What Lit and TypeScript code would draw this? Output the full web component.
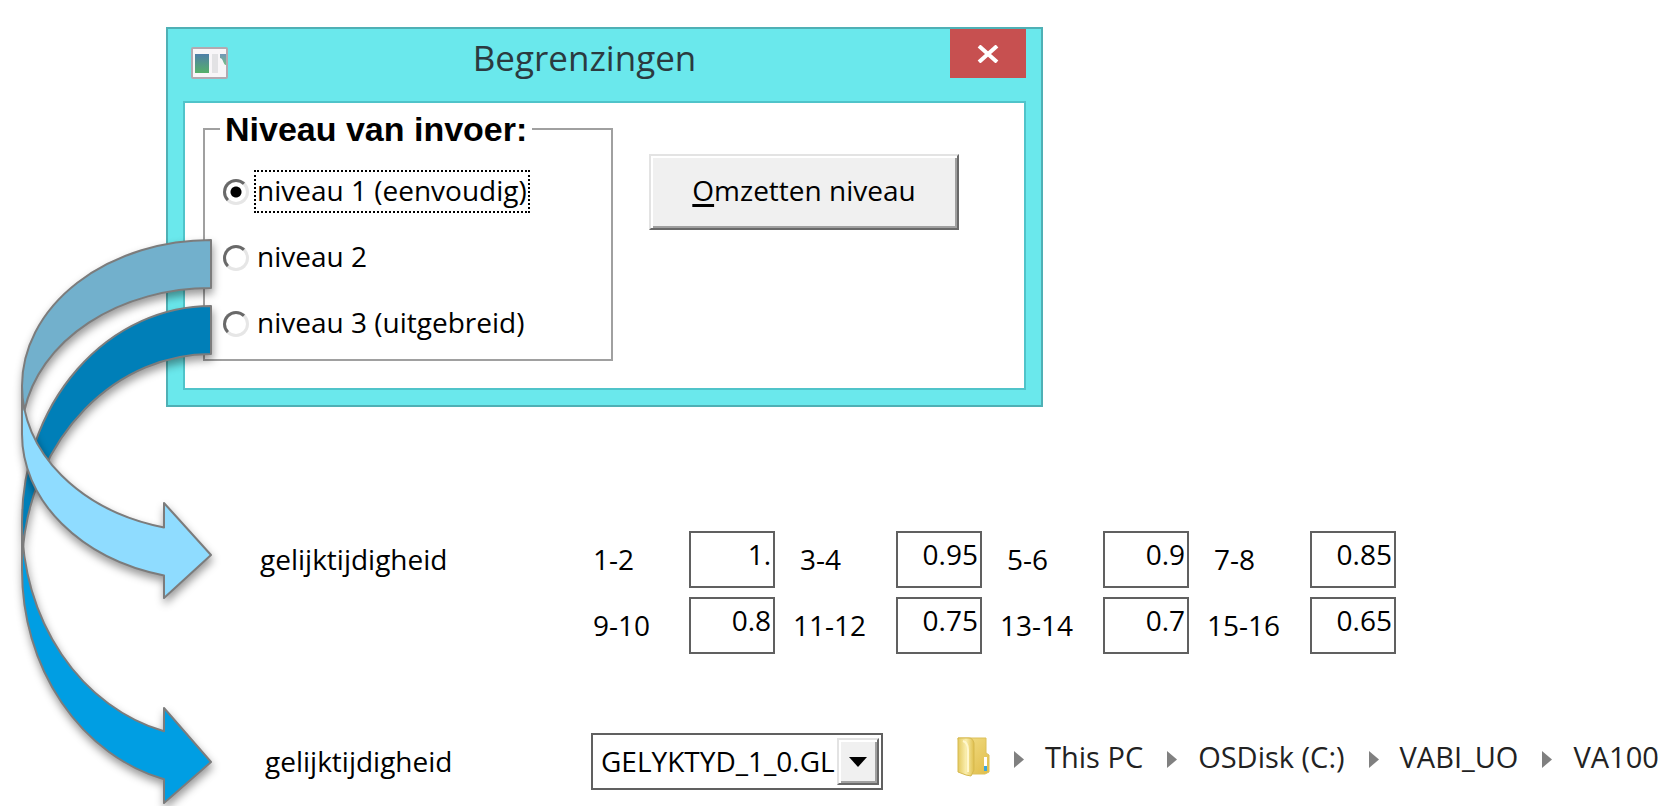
import { LitElement, html, css, svg } from "lit";
import { customElement, state } from "lit/decorators.js";

interface Factor { range: string; value: string; wide?: boolean }

const FACTORS: Factor[] = [
  { range: "1-2", value: "1." },
  { range: "3-4", value: "0.95" },
  { range: "5-6", value: "0.9" },
  { range: "7-8", value: "0.85" },
  { range: "9-10", value: "0.8" },
  { range: "11-12", value: "0.75", wide: true },
  { range: "13-14", value: "0.7", wide: true },
  { range: "15-16", value: "0.65", wide: true },
];

const LEVELS = ["niveau 1 (eenvoudig)", "niveau 2", "niveau 3 (uitgebreid)"];
const CRUMBS = ["This PC", "OSDisk (C:)", "VABI_UO", "VA100"];

@customElement("level-dialog")
class LevelDialog extends LitElement {
  @state() private level = 0;

  static styles = css`
    :host { display: block; box-sizing: border-box; border: 2px solid #4fb0b5; background: #6ae8ec; padding: 0 15px 15px; color: #000; }
    header { display: flex; align-items: flex-start; height: 72px; }
    .app { width: 38px; height: 32px; margin: 18px 0 0 8px; }
    h1 { flex: 1; margin: 0; padding-right: 10px; text-align: center; font-size: 35px; line-height: 58px; font-weight: 400; color: #2b3a40; }
    .close { width: 76px; height: 49px; border: 0; padding: 0; background: #c75050; display: grid; place-items: center; }
    .body { display: flex; align-items: flex-start; border: 2px solid #50c4ca; background: #fff; padding: 6px 18px 27px; gap: 36px; }
    fieldset { box-sizing: border-box; flex: 0 1 410px; min-width: 0; margin: 0; border: 2px solid #a0a0a0; padding: 21px 16px 14px 17px; }
    legend { padding: 0 5px; margin-left: -2px; font: bold 34px/40px "Liberation Sans", Arial, sans-serif; }
    .levels { display: grid; gap: 23px; }
    .level { display: flex; align-items: center; gap: 5px; height: 43px; font-size: 28px; line-height: 37px; }
    .level span { padding: 0 1px 2px; border: 2px dotted transparent; white-space: nowrap; }
    .level input { appearance: none; flex: none; width: 26px; height: 26px; margin: 0 0 0 1px; border: 3px solid; border-color: #696969 #e6e6e6 #e6e6e6 #696969; border-radius: 50%; background: #fff; }
    .level input:checked { background: radial-gradient(circle, #000 5px, #fff 6px); }
    .level input:checked + span { border-color: #000; }
    .convert { flex: 0 1 310px; height: 76px; margin-top: 45px; padding: 0 0 4px; background: #f0f0f0; border: 2px solid; border-color: #e3e3e3 #696969 #696969 #e3e3e3; box-shadow: inset 2px 2px #fff, inset -2px -2px #a0a0a0; font: 28px/40px "Open Sans", "Noto Sans", sans-serif; color: #000; }
    .convert u { text-decoration-thickness: 3px; text-underline-offset: 3px; }
  `;

  render() {
    return html`
      <header>
        <svg class="app" viewBox="0 0 38 32" aria-hidden="true">
          <defs>
            <linearGradient id="pane" x2="0" y2="1"><stop stop-color="#4f7fa8" /><stop offset="1" stop-color="#55b06a" /></linearGradient>
          </defs>
          <rect x="1" y="1" width="35" height="30" rx="1" fill="#f8f6f8" stroke="#b3a9b0" stroke-width="2" />
          <rect x="4" y="7" width="14" height="19" fill="url(#pane)" />
          <rect x="21" y="7" width="6" height="19" fill="#e2e2e4" />
          <path d="M29 7h6v11c-3 0-2-6-6-7z" fill="url(#pane)" opacity=".8" />
        </svg>
        <h1>Begrenzingen</h1>
        <button class="close" aria-label="Sluiten">
          <svg width="22" height="18" viewBox="0 0 22 18" aria-hidden="true"><path d="M2 1l18 16M20 1L2 17" stroke="#fff" stroke-width="4" /></svg>
        </button>
      </header>
      <div class="body">
        <fieldset>
          <legend>Niveau van invoer:</legend>
          <div class="levels">
            ${LEVELS.map((name, i) => html`
              <label class="level">
                <input type="radio" name="level" .checked=${this.level === i} @change=${() => (this.level = i)} />
                <span>${name}</span>
              </label>`)}
          </div>
        </fieldset>
        <button class="convert"><u>O</u>mzetten niveau</button>
      </div>
    `;
  }
}

@customElement("app-root")
class AppRoot extends LitElement {
  static styles = css`
    :host { display: block; position: relative; background: #fff; color: #000; font: 28px/40px "Open Sans", "Noto Sans", sans-serif; }
    level-dialog { max-width: 877px; margin: 0 16px 0 166px; }
    main { padding: 27px 0 16px; }
    .factors { display: flex; margin: 124px 0 79px 260px; }
    .name { flex: none; width: 326px; padding-top: 8px; }
    .grid { display: grid; grid-template-columns: repeat(4, 190px); gap: 9px 17px; }
    .factor { display: flex; }
    .factor label { flex: none; box-sizing: border-box; width: 103px; padding: 8px 0 0 7px; }
    .factor label.wide { padding-left: 0; }
    .factor input { box-sizing: border-box; width: 86px; height: 57px; border: 2px solid #606060; border-radius: 0; padding: 0 2px 11px; background: #fff; color: #000; font: inherit; text-align: right; }
    .source { display: flex; align-items: center; margin-left: 265px; }
    .source > label { flex: none; width: 326px; padding-bottom: 2px; }
    .combo { position: relative; flex: none; width: 292px; height: 57px; }
    select { appearance: none; box-sizing: border-box; width: 100%; height: 100%; border: 2px solid #606060; border-radius: 0; padding: 0 46px 2px 8px; background: #fff; color: #000; font: inherit; }
    .drop { position: absolute; top: 5px; right: 4px; bottom: 5px; width: 42px; box-sizing: border-box; display: grid; place-items: center; pointer-events: none; background: #f0f0f0; border: 2px solid; border-color: #e3e3e3 #696969 #696969 #e3e3e3; box-shadow: inset 2px 2px #fff, inset -2px -2px #a0a0a0; }
    nav { display: flex; align-items: center; margin-left: 74px; padding-bottom: 9px; font-size: 29px; }
    nav a { color: #222; text-decoration: none; white-space: nowrap; }
    .folder { flex: none; }
    .sep { flex: none; margin: 4px 21px 0 24px; }
    .arrows { position: absolute; left: 0; top: 0; pointer-events: none; }
    .arrow { stroke: #7c7c7c; stroke-width: 2; stroke-linejoin: round; filter: drop-shadow(1px 5px 4px rgba(0, 0, 0, 0.4)); }
  `;

  /* Ribbon arrow that leaves at the top right, folds at the left and points right. */
  private ribbon(top: number, ry: number, head: number[], back: string, front: string) {
    const c1 = top + ry;
    const c2 = c1 + 48;
    const foldY = (c1 + c2) / 2;
    const foldX = 211 - 189 * Math.sqrt(1 - (24 / ry) ** 2);
    const edge = ry * 0.969;
    return svg`
      <g class="arrow">
        <path fill=${front} d="M22 ${c1}A189 ${ry} 0 0 0 164 ${c1 + edge}V${head[0]}L211 ${head[1]}L164 ${head[2]}V${c2 + edge}A189 ${ry} 0 0 1 22 ${c2}Z" />
        <path fill=${back} d="M211 ${top}A189 ${ry} 0 0 0 22 ${c1}Q22 ${c1 + 12} ${foldX} ${foldY}A189 ${ry} 0 0 1 211 ${top + 48}Z" />
      </g>`;
  }

  render() {
    return html`
      <main>
        <level-dialog></level-dialog>
        <section class="factors">
          <div class="name">gelijktijdigheid</div>
          <div class="grid">
            ${FACTORS.map((f, i) => html`
              <div class="factor">
                <label class=${f.wide ? "wide" : ""} for="f${i}">${f.range}</label>
                <input id="f${i}" .value=${f.value} />
              </div>`)}
          </div>
        </section>
        <section class="source">
          <label for="file">gelijktijdigheid</label>
          <div class="combo">
            <select id="file"><option>GELYKTYD_1_0.GL</option></select>
            <span class="drop"><svg width="18" height="10" viewBox="0 0 18 10"><path d="M0 0h18L9 10z" /></svg></span>
          </div>
          <nav aria-label="Pad">
            <svg class="folder" width="33" height="40" viewBox="0 0 33 40" aria-hidden="true">
              <defs>
                <linearGradient id="flap"><stop stop-color="#e3c95f" /><stop offset=".5" stop-color="#faeeae" /><stop offset="1" stop-color="#dfbf4c" /></linearGradient>
                <linearGradient id="rear" x2="1" y2="1"><stop stop-color="#f4e08a" /><stop offset="1" stop-color="#e0bd4a" /></linearGradient>
              </defs>
              <path d="M1 1h28v15l3 2v17l-4 2H8z" fill="url(#rear)" stroke="#dcc05a" />
              <path d="M1 1h11c3 0 4 2 5 5v27l-3 6-5-1-8-3z" fill="url(#flap)" stroke="#d6b94f" />
              <path d="M6 4c3 1 5 4 5 9v22" fill="none" stroke="#fff7cc" stroke-width="2" />
              <path d="M27 20h3v14h-3z" fill="#fff" /><path d="M27 29h3v5h-3z" fill="#3aa6dd" />
            </svg>
            ${CRUMBS.map((c) => html`
              <svg class="sep" width="10" height="17" viewBox="0 0 10 17" aria-hidden="true"><path d="M0 0l10 8.5L0 17z" fill="#808080" /></svg>
              <a href="#">${c}</a>`)}
          </nav>
        </section>
      </main>
      <svg class="arrows" width="230" height="806" viewBox="0 0 230 806" aria-hidden="true">
        ${this.ribbon(306, 216, [708, 762, 803], "#007fb8", "#009ee3")}
        ${this.ribbon(240, 146, [503, 555, 598], "#72b0cc", "#8fdcff")}
      </svg>
    `;
  }
}
